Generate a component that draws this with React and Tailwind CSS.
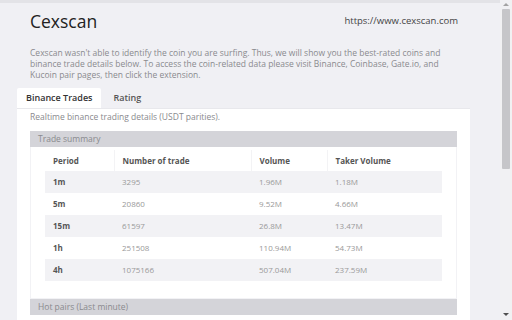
import React from 'react';

const rows = [
  { period: '1m', trades: '3295', volume: '1.96M', taker: '1.18M' },
  { period: '5m', trades: '20860', volume: '9.52M', taker: '4.66M' },
  { period: '15m', trades: '61597', volume: '26.8M', taker: '13.47M' },
  { period: '1h', trades: '251508', volume: '110.94M', taker: '54.73M' },
  { period: '4h', trades: '1075166', volume: '507.04M', taker: '237.59M' },
];

const Scrollbar = () => (
  <div className="w-[12px] h-[320px] bg-[#f1f1f3] flex flex-col items-center shrink-0">
    <div className="h-[9px] flex items-center justify-center">
      <div className="w-0 h-0 border-l-[3px] border-r-[3px] border-b-[3px] border-l-transparent border-r-transparent border-b-[#a3a3a3]" />
    </div>
    <div className="w-[8px] h-[160px] bg-[#c6c6c9] rounded-[1px]" />
    <div className="flex-1" />
    <div className="h-[12px] flex items-center justify-center">
      <div className="w-0 h-0 border-l-[3px] border-r-[3px] border-t-[3px] border-l-transparent border-r-transparent border-t-[#505050]" />
    </div>
  </div>
);

const App = () => {
  return (
    <div className="w-[512px] h-[320px] overflow-hidden flex bg-[#f0f0f4] font-['Open_Sans',sans-serif]">
      <div className="flex-1 flex flex-col border-t-[3px] border-[#e3e3e7]">
        <div className="flex items-center justify-between pl-[30px] pr-[42px] pt-[6px]">
          <h1 className="text-[17.5px] leading-[24px] text-[#222] font-normal">Cexscan</h1>
          <span className="text-[9.5px] text-[#444]">https://www.cexscan.com</span>
        </div>
        <p className="pl-[30px] pr-[48px] mt-[14px] text-[8.5px] leading-[11px] text-[#8a8a8e]">
          Cexscan wasn't able to identify the coin you are surfing. Thus, we will show you the best-rated coins and
          binance trade details below. To access the coin-related data please visit Binance, Coinbase, Gate.io, and
          Kucoin pair pages, then click the extension.
        </p>
        <div className="flex pl-[17px] mt-[8px] text-[9px] font-semibold text-[#333]">
          <div className="bg-white px-[9px] h-[20px] flex items-center rounded-t-[2px]">Binance Trades</div>
          <div className="px-[12px] h-[20px] flex items-center text-[#555]">Rating</div>
        </div>
        <div className="ml-[17px] mr-[30px] bg-white flex-1 px-[13px] border-t border-[#e8e8ec]">
          <p className="text-[8.5px] text-[#8a8a8e] mt-[1px] leading-[13px]">
            Realtime binance trading details (USDT parities).
          </p>
          <div className="mt-[8px] h-[16px] bg-[#d4d4d9] flex items-center pl-[8px] text-[8.5px] text-[#8a8a8e]">
            Trade summary
          </div>
          <div className="px-[14px] pt-[3px] pb-[17px] border-x border-b border-[#f2f2f5]">
            <table className="w-full text-[8px] border-collapse">
              <thead>
                <tr className="h-[21px] text-[#555] font-bold">
                  <th className="w-[69px] text-left pl-[8px] border-r border-[#f3f3f5]">Period</th>
                  <th className="w-[137px] text-left pl-[8px] border-r border-[#f3f3f5]">Number of trade</th>
                  <th className="w-[76px] text-left pl-[8px] border-r border-[#f3f3f5]">Volume</th>
                  <th className="text-left pl-[8px]">Taker Volume</th>
                </tr>
              </thead>
              <tbody>
                {rows.map((row, i) => (
                  <tr key={row.period} className={i % 2 === 0 ? 'h-[22px] bg-[#f2f2f5]' : 'h-[22px] bg-white'}>
                    <td className="pl-[8px] font-bold text-[#555]">{row.period}</td>
                    <td className="pl-[8px] text-[#999]">{row.trades}</td>
                    <td className="pl-[8px] text-[#999]">{row.volume}</td>
                    <td className="pl-[8px] text-[#999]">{row.taker}</td>
                  </tr>
                ))}
              </tbody>
            </table>
          </div>
          <div className="h-[16px] bg-[#d4d4d9] flex items-center pl-[8px] text-[8.5px] text-[#8a8a8e]">
            Hot pairs (Last minute)
          </div>
        </div>
      </div>
      <Scrollbar />
    </div>
  );
};

export default App;
